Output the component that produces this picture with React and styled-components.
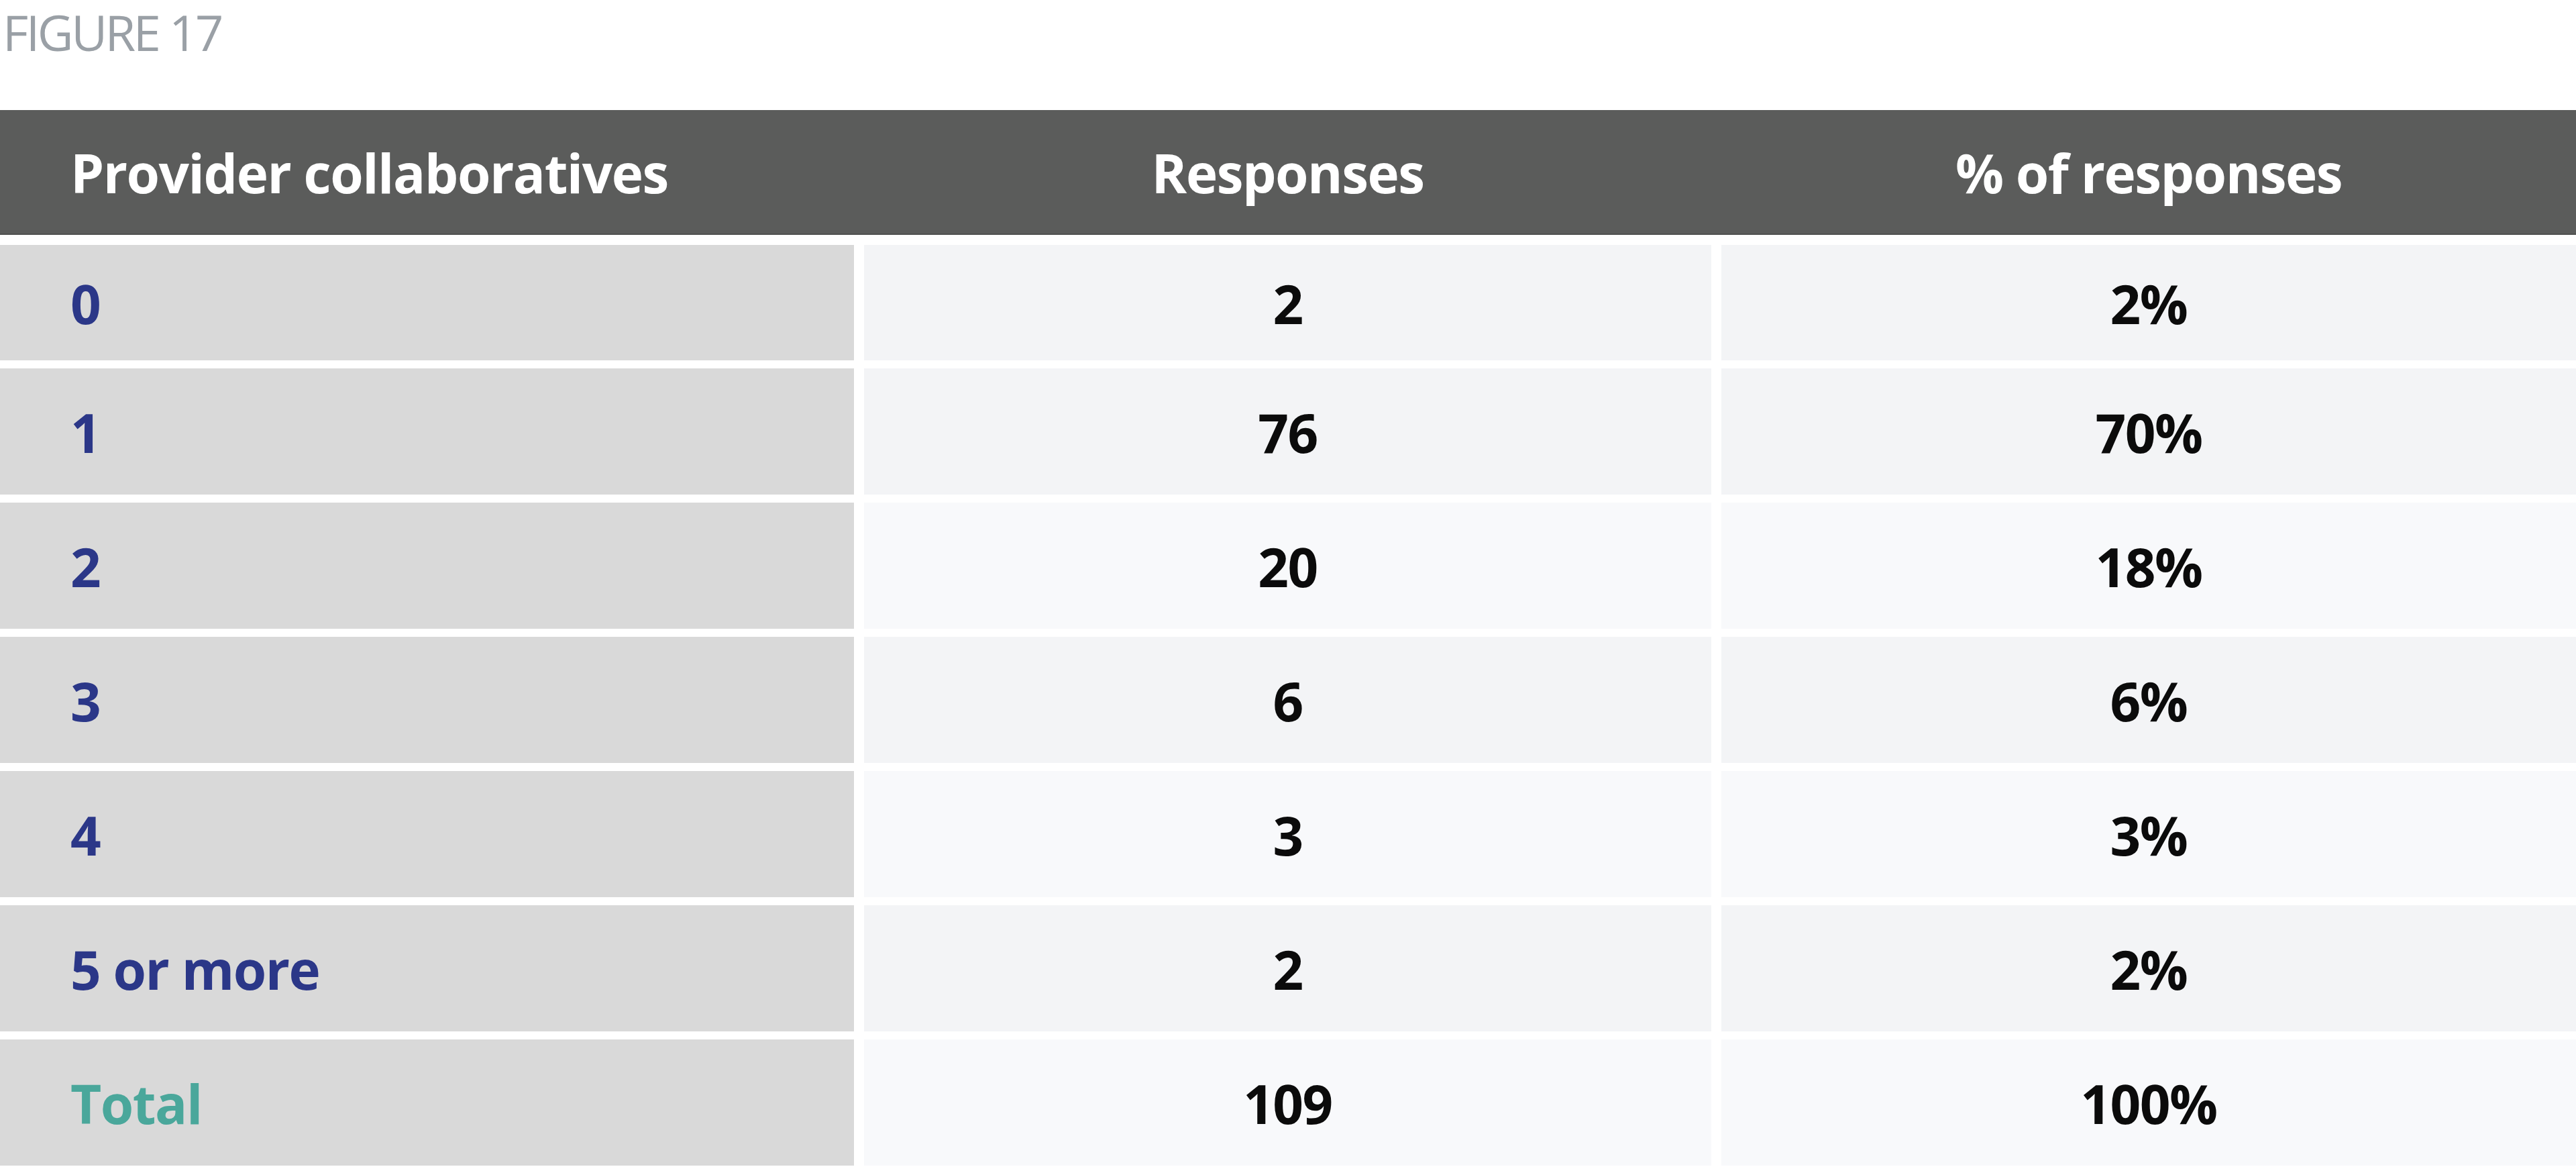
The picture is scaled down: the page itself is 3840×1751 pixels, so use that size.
import styled, { createGlobalStyle } from 'styled-components';

const GlobalStyle = createGlobalStyle`
  html, body {
    margin: 0;
    padding: 0;
    background: #ffffff;
  }
  body {
    font-family: "Open Sans", "Liberation Sans", sans-serif;
  }
`;

const Page = styled.div`
  width: 3840px;
  display: flex;
  flex-direction: column;
`;

const Title = styled.div`
  height: 164px;
  box-sizing: border-box;
  padding: 11px 0 0 4px;
  font-size: 74px;
  line-height: 1;
  font-weight: 400;
  letter-spacing: -3.5px;
  color: #9aa0a6;
`;

const Table = styled.div`
  display: flex;
  flex-direction: column;
  gap: 12px;
`;

const Columns = styled.div`
  display: grid;
  grid-template-columns: 1273px 1263px 1fr;
  column-gap: 15px;
  height: ${(p) => p.$h}px;
`;

const HeadRow = styled(Columns)`
  background: #5b5c5b;
  border-bottom: 2px solid #4f504f;
  box-sizing: border-box;
  margin-bottom: 3px;
`;

const HeadCell = styled.div`
  display: flex;
  align-items: center;
  justify-content: ${(p) => (p.$left ? 'flex-start' : 'center')};
  padding-left: ${(p) => (p.$left ? '105px' : '0')};
  color: #ffffff;
  font-size: 80px;
  font-weight: 700;
  letter-spacing: -1.5px;
`;

const LabelCell = styled.div`
  display: flex;
  align-items: center;
  padding-left: 105px;
  background: #d9d9d9;
  color: ${(p) => (p.$total ? '#4aa79b' : '#2b3788')};
  font-size: 80px;
  font-weight: 700;
  letter-spacing: -1.5px;
`;

const ValueCell = styled.div`
  display: flex;
  align-items: center;
  justify-content: center;
  background: ${(p) => (p.$light ? '#f8f9fb' : '#f3f4f6')};
  color: #0b0b0b;
  font-size: 80px;
  font-weight: 700;
  letter-spacing: -1.5px;
`;

const rows = [
  { label: '0', count: '2', pct: '2%', h: 172, light: false },
  { label: '1', count: '76', pct: '70%', h: 188, light: false },
  { label: '2', count: '20', pct: '18%', h: 188, light: true },
  { label: '3', count: '6', pct: '6%', h: 188, light: false },
  { label: '4', count: '3', pct: '3%', h: 188, light: true },
  { label: '5 or more', count: '2', pct: '2%', h: 188, light: false },
  { label: 'Total', count: '109', pct: '100%', h: 188, light: true, total: true },
];

export default function App() {
  return (
    <Page>
      <GlobalStyle />
      <Title>FIGURE 17</Title>
      <Table>
        <HeadRow $h={186}>
          <HeadCell $left>Provider collaboratives</HeadCell>
          <HeadCell>Responses</HeadCell>
          <HeadCell>% of responses</HeadCell>
        </HeadRow>
        {rows.map((r) => (
          <Columns key={r.label} $h={r.h}>
            <LabelCell $total={r.total}>{r.label}</LabelCell>
            <ValueCell $light={r.light}>{r.count}</ValueCell>
            <ValueCell $light={r.light}>{r.pct}</ValueCell>
          </Columns>
        ))}
      </Table>
    </Page>
  );
}
